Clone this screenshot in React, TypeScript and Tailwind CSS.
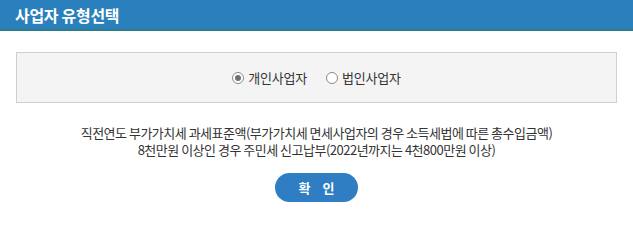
import React, { useState } from 'react';

const font = { fontFamily: '"Noto Sans CJK KR", "Noto Sans", sans-serif' };

export default function App() {
  const [type, setType] = useState<'personal' | 'corp'>('personal');

  return (
    <div className="w-[633px] h-[211px] bg-white text-[#333]" style={font}>
      <div className="h-[31px] bg-[#2a80bd] border-b-2 border-[#2b7c86] flex items-center px-[15px]">
        <h1 className="text-white text-[16px] font-bold leading-none tracking-[-0.3px]">사업자 유형선택</h1>
      </div>

      <div className="px-[16px] pt-[21px]">
        <div className="h-[51px] bg-[#f4f4f4] border border-[#cfcfcf] flex items-center justify-center gap-[19px] text-[13px] tracking-[-0.2px]">
          <label className="flex items-center gap-[4px] cursor-pointer" onClick={() => setType('personal')}>
            <span className="w-[12px] h-[12px] rounded-full border border-[#8a8a8a] bg-white flex items-center justify-center">
              {type === 'personal' && <span className="w-[6px] h-[6px] rounded-full bg-[#707070]" />}
            </span>
            <span>개인사업자</span>
          </label>
          <label className="flex items-center gap-[4px] cursor-pointer" onClick={() => setType('corp')}>
            <span className="w-[12px] h-[12px] rounded-full border border-[#8a8a8a] bg-white flex items-center justify-center">
              {type === 'corp' && <span className="w-[6px] h-[6px] rounded-full bg-[#707070]" />}
            </span>
            <span>법인사업자</span>
          </label>
        </div>
      </div>

      <div className="mt-[21px] text-center text-[13px] leading-[17px] tracking-[-0.5px]">
        <p>직전연도 부가가치세 과세표준액(부가가치세 면세사업자의 경우 소득세법에 따른 총수입금액)</p>
        <p>8천만원 이상인 경우 주민세 신고납부(2022년까지는 4천800만원 이상)</p>
      </div>

      <div className="mt-[15px] flex justify-center">
        <button className="w-[83px] h-[29px] rounded-full bg-[#2f7dc2] text-white text-[13px] font-bold tracking-[12px] pl-[12px]">
          확인
        </button>
      </div>
    </div>
  );
}
